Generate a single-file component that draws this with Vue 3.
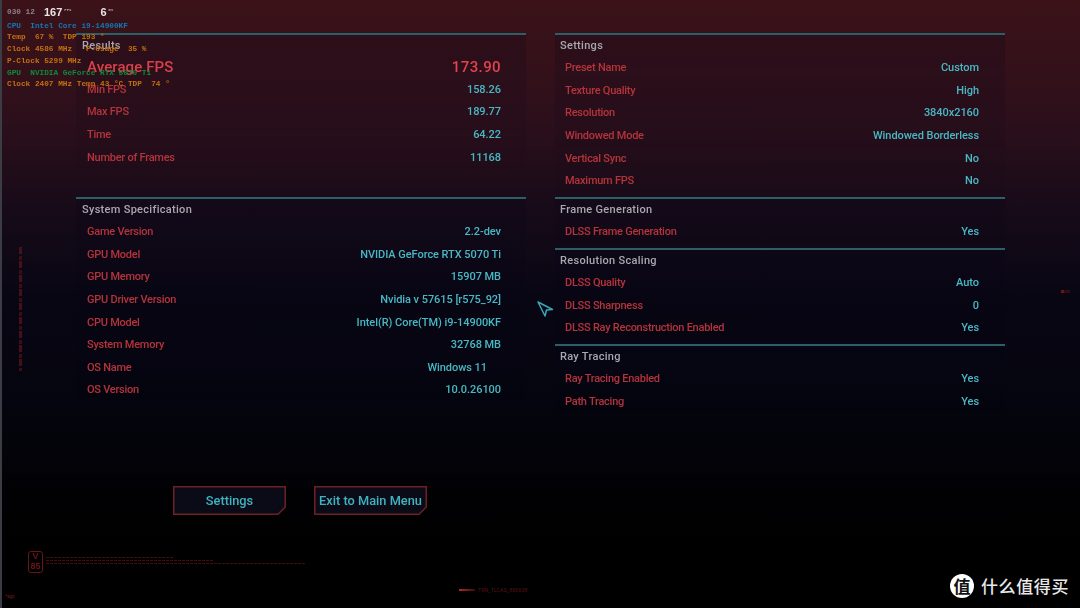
<script setup>
const results = [
  { k: 'Average FPS', v: '173.90', big: true },
  { k: 'Min FPS', v: '158.26' },
  { k: 'Max FPS', v: '189.77' },
  { k: 'Time', v: '64.22' },
  { k: 'Number of Frames', v: '11168' },
]
const spec = [
  { k: 'Game Version', v: '2.2-dev' },
  { k: 'GPU Model', v: 'NVIDIA GeForce RTX 5070 Ti' },
  { k: 'GPU Memory', v: '15907 MB' },
  { k: 'GPU Driver Version', v: 'Nvidia v 57615 [r575_92]' },
  { k: 'CPU Model', v: 'Intel(R) Core(TM) i9-14900KF' },
  { k: 'System Memory', v: '32768 MB' },
  { k: 'OS Name', v: 'Windows 11', pad: true },
  { k: 'OS Version', v: '10.0.26100' },
]
const right = [
  { t: 'Settings', rows: [
    { k: 'Preset Name', v: 'Custom' },
    { k: 'Texture Quality', v: 'High' },
    { k: 'Resolution', v: '3840x2160' },
    { k: 'Windowed Mode', v: 'Windowed Borderless' },
    { k: 'Vertical Sync', v: 'No' },
    { k: 'Maximum FPS', v: 'No' },
  ] },
  { t: 'Frame Generation', rows: [{ k: 'DLSS Frame Generation', v: 'Yes' }] },
  { t: 'Resolution Scaling', rows: [
    { k: 'DLSS Quality', v: 'Auto' },
    { k: 'DLSS Sharpness', v: '0' },
    { k: 'DLSS Ray Reconstruction Enabled', v: 'Yes' },
  ] },
  { t: 'Ray Tracing', rows: [
    { k: 'Ray Tracing Enabled', v: 'Yes' },
    { k: 'Path Tracing', v: 'Yes' },
  ] },
]
const hudOrange1 = ['Temp  67 %  TDP 193 °', 'Clock 4586 MHz   P-Usage  35 %', 'P-Clock 5299 MHz']
const cpu = 'CPU  Intel Core i9-14900KF'
const gpu = 'GPU  NVIDIA GeForce RTX 5070 Ti'
const gpuLine = 'Clock 2407 MHz Temp 43 °C TDP  74 °'
</script>

<template>
  <div class="page">
    <div class="columns">
      <div class="col">
        <section class="sec first">
          <h2>Results</h2>
          <div v-for="r in results" :key="r.k" class="row" :class="{ big: r.big }">
            <span class="k">{{ r.k }}</span><span class="v">{{ r.v }}</span>
          </div>
        </section>
        <section class="sec spec">
          <h2>System Specification</h2>
          <div v-for="r in spec" :key="r.k" class="row">
            <span class="k">{{ r.k }}</span><span class="v" :class="{ pad: r.pad }">{{ r.v }}</span>
          </div>
        </section>
        <div class="buttons">
          <button class="btn">
            <svg class="btn-bg" viewBox="0 0 113 29"><path d="M.75.75H112.250V21L105 28.250H.75Z" /></svg>
            <span>Settings</span>
          </button>
          <button class="btn">
            <svg class="btn-bg" viewBox="0 0 113 29"><path d="M.75.75H112.250V21L105 28.250H.75Z" /></svg>
            <span>Exit to Main Menu</span>
          </button>
        </div>
      </div>
      <div class="col right">
        <section v-for="s in right" :key="s.t" class="sec tight">
          <h2>{{ s.t }}</h2>
          <div v-for="r in s.rows" :key="r.k" class="row">
            <span class="k">{{ r.k }}</span><span class="v">{{ r.v }}</span>
          </div>
        </section>
      </div>
    </div>

    <div class="hud">
      <div class="l1"><span class="gr">030 12</span><b class="n1">167</b><i>FPS</i><b class="n2">6</b><i>ms</i></div>
      <div class="blue">{{ cpu }}</div>
      <div v-for="l in hudOrange1" :key="l">{{ l }}</div>
      <div class="green">{{ gpu }}</div>
      <div>{{ gpuLine }}</div>
    </div>

    <div class="side-dash"></div>
    <div class="edge-mark"></div>

    <svg class="cursor" viewBox="0 0 18 18"><path d="M2 2L16.500 9.500L10.500 10L9 16Z" /></svg>

    <div class="legal">
      <div class="badge"><span>V</span><span>85</span></div>
      <div class="legal-lines"><i class="a"></i><i class="b"></i><i class="c"></i></div>
    </div>
    <div class="ago">*ago</div>
    <div class="trn"><i></i><span>TRN_TLCAS_800X38</span></div>

    <div class="wm">
      <div class="wm-logo"><span>值</span></div>
      <span class="wm-text">什么值得买</span>
    </div>
  </div>
</template>

<style>
html, body { margin: 0; background: #000; }
</style>

<style scoped>
.page {
  position: relative;
  width: 1080px;
  height: 608px;
  overflow: hidden;
  box-sizing: border-box;
  padding: 33px 0 0 76px;
  font-family: "Roboto", "Liberation Sans", sans-serif;
  font-size: 11px;
  background:
    linear-gradient(90deg, #3c3c44 0, #3c3c44 2px, transparent 2px),
    linear-gradient(180deg, #3b1218 0, #35111a 60px, #2a0f1b 130px, #150a18 220px, #080613 300px, #05050f 400px, #020206 480px, #000 540px);
}
.columns { display: flex; gap: 29px; align-items: flex-start; filter: blur(.35px); }
.col { width: 450px; display: flex; flex-direction: column; }
.sec {
  border-top: 2px solid #2a6068;
  background: linear-gradient(180deg, rgba(6, 6, 26, .22), rgba(6, 6, 26, .1) 60%, transparent);
}
.spec { margin-top: 27.750px; }
.tight { margin-bottom: 4.200px; }
h2 {
  margin: 0;
  height: 22px;
  line-height: 22px;
  padding-left: 6px;
  font-size: 11px;
  font-weight: 500;
  letter-spacing: .3px;
  color: #a8a8b0;
}
.first h2 { height: 21px; line-height: 21px; }
.right h2 { padding-left: 5px; }
.row {
  display: flex;
  justify-content: space-between;
  height: 22.650px;
  line-height: 22.650px;
  padding: 0 25px 0 11px;
}
.right .row { padding: 0 26px 0 10px; }
.k { color: #b5343b; font-weight: 500; letter-spacing: -.25px; }
.v { color: #48b8c4; font-weight: 500; letter-spacing: -.05px; }
.pad { padding-right: 14px; }
.big .k, .big .v { font-size: 15px; font-weight: 500; letter-spacing: .1px; color: #d8414b; }
.big .v { color: #e0444e; letter-spacing: .4px; }
.buttons { display: flex; gap: 28px; margin: 83.800px 0 0 97px; }
.btn {
  position: relative;
  width: 113px;
  height: 29px;
  padding: 0;
  border: 0;
  background: none;
  font: inherit;
  font-size: 12.800px;
  font-weight: 500;
  color: #3fb4c0;
}
.btn span { position: relative; }
.btn-bg { position: absolute; inset: 0; width: 100%; height: 100%; }
.btn-bg path { fill: #0a0b17; stroke: #6e2024; stroke-width: 1.500; }

.hud {
  position: absolute;
  left: 7px;
  top: 6px;
  font-family: "Liberation Mono", monospace;
  font-size: 7.750px;
  font-weight: 700;
  line-height: 11.800px;
  white-space: pre;
  color: #c4700f;
  filter: blur(.35px);
}
.hud .l1 { height: 13px; margin-bottom: 1.500px; color: #8f8189; display: flex; align-items: center; }
.hud .blue { color: #1278b4; }
.hud .green { color: #0e8a3c; }
.hud .n1, .hud .n2 { color: #e8e4e6; font-size: 11px; font-family: "Liberation Sans", sans-serif; }
.hud .n1 { margin-left: 9px; }
.hud .n2 { margin-left: 29px; }
.hud i { font-size: 4px; font-style: normal; margin: -4px 0 0 2px; color: #b0a8ac; }

.side-dash {
  position: absolute;
  left: 19px;
  top: 247px;
  width: 3px;
  height: 124px;
  background: repeating-linear-gradient(180deg, #5a1518 0 7px, transparent 7px 9px, #4a1216 9px 13px, transparent 13px 14px);
  opacity: .75;
  filter: blur(.4px);
}
.edge-mark {
  position: absolute;
  left: 1061px;
  top: 290px;
  width: 9px;
  height: 3px;
  background: linear-gradient(90deg, #6a1418 0 3px, #2e0c10 3px);
}
.cursor { position: absolute; left: 536px; top: 300px; width: 18px; height: 18px; }
.cursor path { fill: none; stroke: #35a9b8; stroke-width: 1.500; stroke-linejoin: round; }

.legal { position: absolute; left: 28px; top: 551px; display: flex; gap: 3px; filter: blur(.3px); }
.badge {
  box-sizing: border-box;
  width: 15px;
  height: 22px;
  border: 1px solid #6a1418;
  border-radius: 3px;
  display: flex;
  flex-direction: column;
  align-items: center;
  font: 700 9px/9.500px "Liberation Sans", sans-serif;
  color: #6a1418;
}
.legal-lines { display: flex; flex-direction: column; gap: 2px; padding-top: 6px; }
.legal-lines i {
  display: block;
  height: 1px;
  background: repeating-linear-gradient(90deg, #430d10 0 3px, transparent 3px 4px);
}
.legal-lines .a { width: 127px; }
.legal-lines .b { width: 167px; }
.legal-lines .c { width: 259px; }
.ago { position: absolute; left: 5px; top: 594px; font-size: 4.500px; color: #7a1a1c; }
.trn { position: absolute; left: 459px; top: 587px; display: flex; align-items: center; gap: 3px; font-size: 5px; letter-spacing: .2px; color: #5a1214; }
.trn i { width: 16px; height: 2px; background: linear-gradient(90deg, #b02a2a, #3a0c0c); }
.wm { position: absolute; left: 950px; top: 574px; height: 24px; display: flex; align-items: center; white-space: nowrap; }
.wm-logo {
  width: 24px;
  height: 24px;
  flex: none;
  border-radius: 50%;
  background: #fff;
  text-align: center;
  font: 700 17px/24px "Noto Sans CJK SC", sans-serif;
  color: #111;
}
.wm-text {
  margin-left: 7px;
  font: 500 17px/24px "Noto Sans CJK SC", sans-serif;
  letter-spacing: .6px;
  color: #e8e8e8;
}
</style>
